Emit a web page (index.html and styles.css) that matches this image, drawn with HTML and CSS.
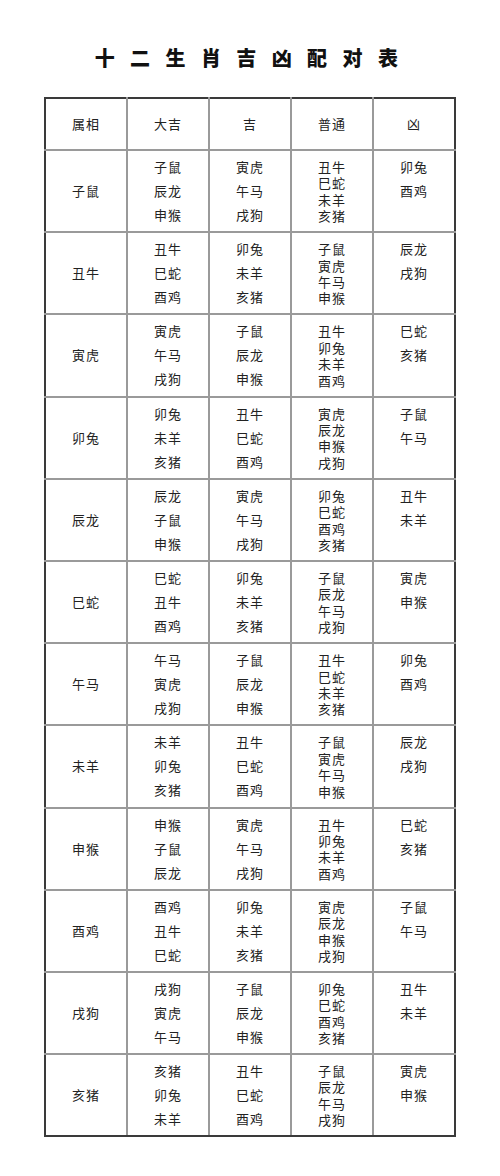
FILE: index.html
```html
<!DOCTYPE html>
<html lang="zh">
<head>
<meta charset="utf-8">
<title>十二生肖吉凶配对表</title>
<link rel="stylesheet" href="styles.css">
</head>
<body>
<h1 class="title">十二生肖吉凶配对表</h1>
<table class="chart">
<thead>
<tr><th>属相</th><th>大吉</th><th>吉</th><th>普通</th><th>凶</th></tr>
</thead>
<tbody>
<tr><td class="sign">子鼠</td><td class="list"><div>子鼠</div><div>辰龙</div><div>申猴</div></td><td class="list"><div>寅虎</div><div>午马</div><div>戌狗</div></td><td class="tight"><div>丑牛</div><div>巳蛇</div><div>未羊</div><div>亥猪</div></td><td class="list"><div>卯兔</div><div>酉鸡</div></td></tr>
<tr><td class="sign">丑牛</td><td class="list"><div>丑牛</div><div>巳蛇</div><div>酉鸡</div></td><td class="list"><div>卯兔</div><div>未羊</div><div>亥猪</div></td><td class="tight"><div>子鼠</div><div>寅虎</div><div>午马</div><div>申猴</div></td><td class="list"><div>辰龙</div><div>戌狗</div></td></tr>
<tr><td class="sign">寅虎</td><td class="list"><div>寅虎</div><div>午马</div><div>戌狗</div></td><td class="list"><div>子鼠</div><div>辰龙</div><div>申猴</div></td><td class="tight"><div>丑牛</div><div>卯兔</div><div>未羊</div><div>酉鸡</div></td><td class="list"><div>巳蛇</div><div>亥猪</div></td></tr>
<tr><td class="sign">卯兔</td><td class="list"><div>卯兔</div><div>未羊</div><div>亥猪</div></td><td class="list"><div>丑牛</div><div>巳蛇</div><div>酉鸡</div></td><td class="tight"><div>寅虎</div><div>辰龙</div><div>申猴</div><div>戌狗</div></td><td class="list"><div>子鼠</div><div>午马</div></td></tr>
<tr><td class="sign">辰龙</td><td class="list"><div>辰龙</div><div>子鼠</div><div>申猴</div></td><td class="list"><div>寅虎</div><div>午马</div><div>戌狗</div></td><td class="tight"><div>卯兔</div><div>巳蛇</div><div>酉鸡</div><div>亥猪</div></td><td class="list"><div>丑牛</div><div>未羊</div></td></tr>
<tr><td class="sign">巳蛇</td><td class="list"><div>巳蛇</div><div>丑牛</div><div>酉鸡</div></td><td class="list"><div>卯兔</div><div>未羊</div><div>亥猪</div></td><td class="tight"><div>子鼠</div><div>辰龙</div><div>午马</div><div>戌狗</div></td><td class="list"><div>寅虎</div><div>申猴</div></td></tr>
<tr><td class="sign">午马</td><td class="list"><div>午马</div><div>寅虎</div><div>戌狗</div></td><td class="list"><div>子鼠</div><div>辰龙</div><div>申猴</div></td><td class="tight"><div>丑牛</div><div>巳蛇</div><div>未羊</div><div>亥猪</div></td><td class="list"><div>卯兔</div><div>酉鸡</div></td></tr>
<tr><td class="sign">未羊</td><td class="list"><div>未羊</div><div>卯兔</div><div>亥猪</div></td><td class="list"><div>丑牛</div><div>巳蛇</div><div>酉鸡</div></td><td class="tight"><div>子鼠</div><div>寅虎</div><div>午马</div><div>申猴</div></td><td class="list"><div>辰龙</div><div>戌狗</div></td></tr>
<tr><td class="sign">申猴</td><td class="list"><div>申猴</div><div>子鼠</div><div>辰龙</div></td><td class="list"><div>寅虎</div><div>午马</div><div>戌狗</div></td><td class="tight"><div>丑牛</div><div>卯兔</div><div>未羊</div><div>酉鸡</div></td><td class="list"><div>巳蛇</div><div>亥猪</div></td></tr>
<tr><td class="sign">酉鸡</td><td class="list"><div>酉鸡</div><div>丑牛</div><div>巳蛇</div></td><td class="list"><div>卯兔</div><div>未羊</div><div>亥猪</div></td><td class="tight"><div>寅虎</div><div>辰龙</div><div>申猴</div><div>戌狗</div></td><td class="list"><div>子鼠</div><div>午马</div></td></tr>
<tr><td class="sign">戌狗</td><td class="list"><div>戌狗</div><div>寅虎</div><div>午马</div></td><td class="list"><div>子鼠</div><div>辰龙</div><div>申猴</div></td><td class="tight"><div>卯兔</div><div>巳蛇</div><div>酉鸡</div><div>亥猪</div></td><td class="list"><div>丑牛</div><div>未羊</div></td></tr>
<tr><td class="sign">亥猪</td><td class="list"><div>亥猪</div><div>卯兔</div><div>未羊</div></td><td class="list"><div>丑牛</div><div>巳蛇</div><div>酉鸡</div></td><td class="tight"><div>子鼠</div><div>辰龙</div><div>午马</div><div>戌狗</div></td><td class="list"><div>寅虎</div><div>申猴</div></td></tr>
</tbody>
</table>
</body>
</html>
```
FILE: styles.css
```css
html, body {
  margin: 0;
  padding: 0;
  background: #ffffff;
}
body {
  width: 500px;
  font-family: "Noto Sans CJK SC", "Noto Sans", sans-serif;
  color: #222222;
}
.title {
  margin: 0;
  padding: 46px 0 0 8px;
  height: 51px;
  box-sizing: content-box;
  text-align: center;
  font-size: 20px;
  line-height: 24px;
  font-weight: 900;
  letter-spacing: 15.4px;
  color: #111111;
}
.chart {
  margin: 0 auto;
  width: 412px;
  table-layout: fixed;
  border-collapse: collapse;
}
.chart thead tr {
  height: 52px;
}
.chart tbody tr {
  height: 82.2px;
}
.chart th,
.chart td {
  border: 2px solid #9a9a9a;
  padding: 0;
  text-align: center;
  font-size: 13px;
  letter-spacing: 1px;
  font-weight: 400;
}
.chart tr > :first-child {
  border-left-color: #3a3a3a;
}
.chart tr > :last-child {
  border-right-color: #3a3a3a;
}
.chart thead th {
  border-top-color: #3a3a3a;
}
.chart tbody tr:last-child td {
  border-bottom-color: #3a3a3a;
}
.chart th {
  vertical-align: middle;
  line-height: 16px;
}
.chart td {
  vertical-align: top;
}
.chart td.sign {
  vertical-align: middle;
  line-height: 16px;
}
.chart td.list {
  padding-top: 4px;
  line-height: 24px;
}
.chart td.tight {
  padding-top: 8px;
  line-height: 16.4px;
}
```
